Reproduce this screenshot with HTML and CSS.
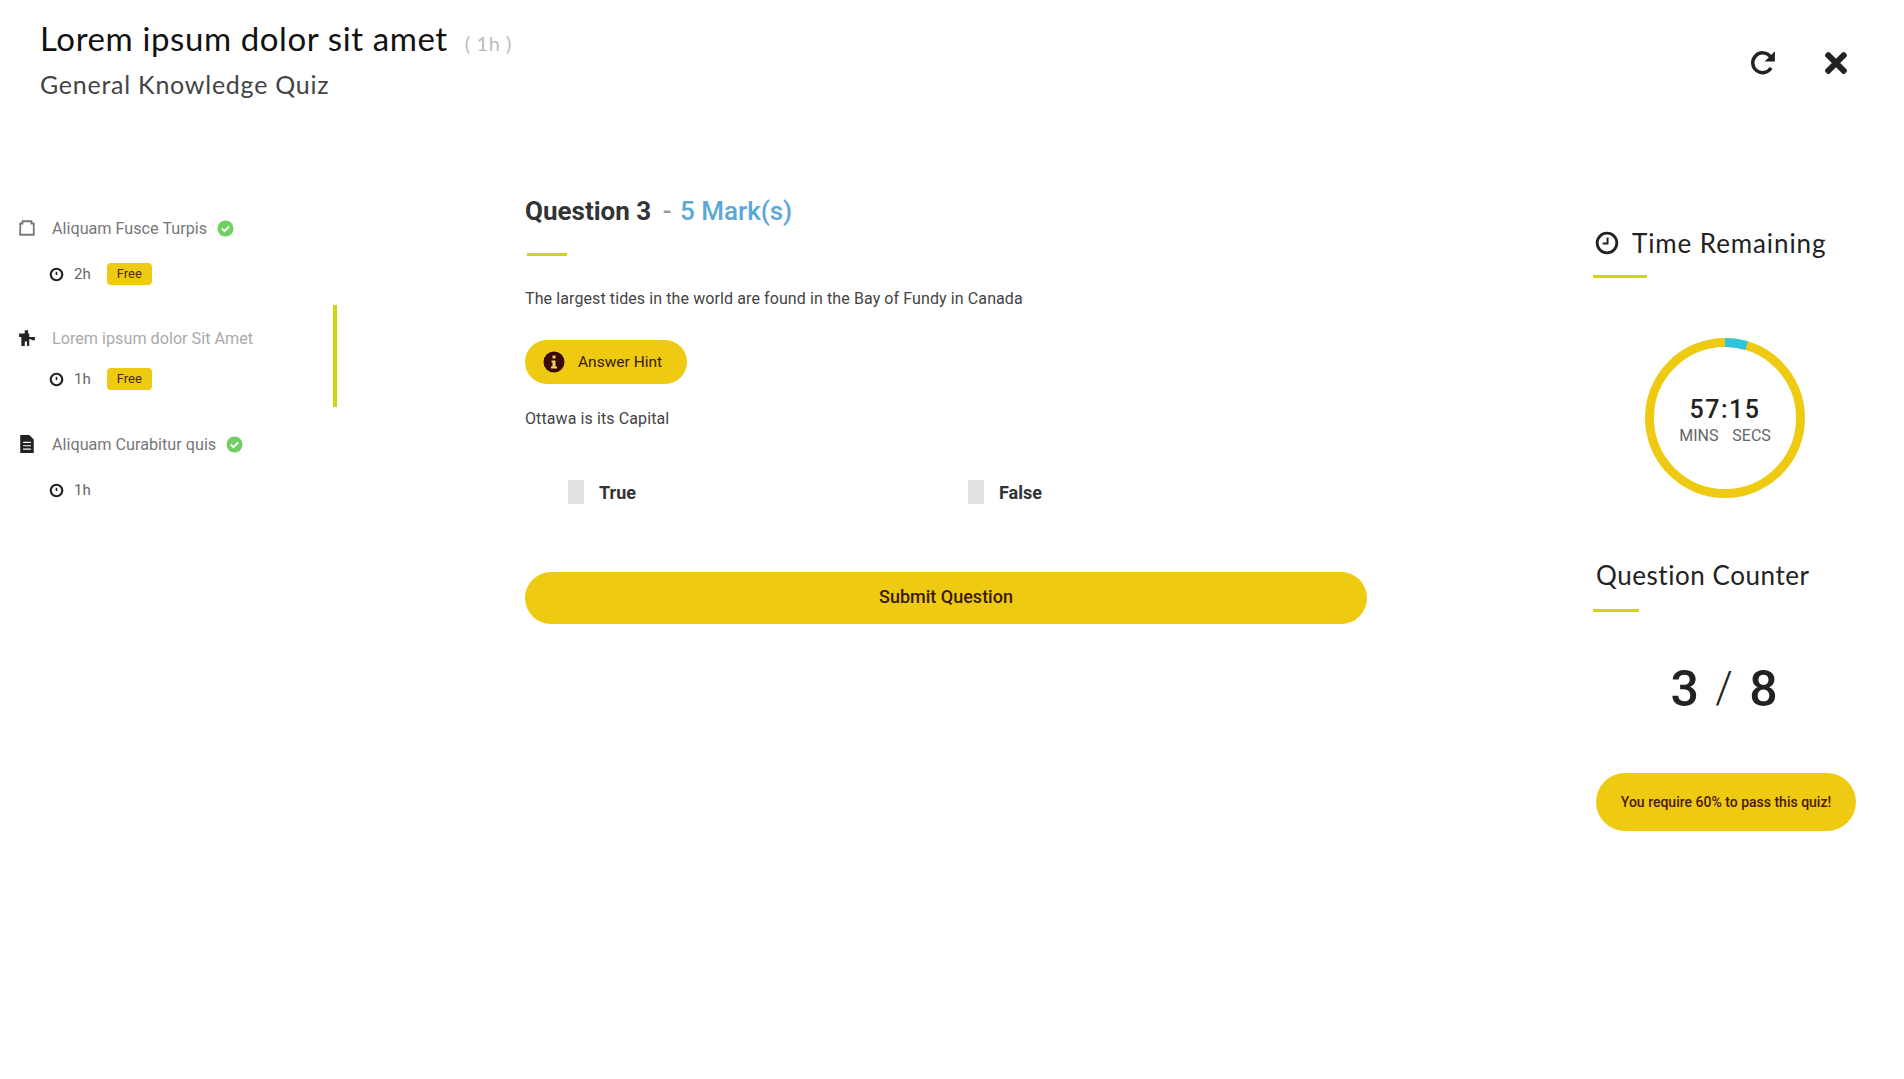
FILE: index.html
```html
<!DOCTYPE html>
<html lang="en">
<head>
<meta charset="UTF-8">
<meta name="viewport" content="width=device-width, initial-scale=1.0">
<title>General Knowledge Quiz</title>
<link rel="stylesheet" href="styles.css">
</head>
<body>

<!-- Top bar -->
<header class="top-bar">
<div class="course-info">
<h1>Lorem ipsum dolor sit amet <span class="course-length">( 1h )</span></h1>
<p>General Knowledge Quiz</p>
</div>
<div class="top-actions">
<svg class="icon-refresh" viewBox="0 0 26 26"><path d="M20.5 17.6A9.2 9.2 0 1 1 20 7.2" fill="none" stroke="#222" stroke-width="3.2"/><path d="M24 2v9.5h-9.5z" fill="#222"/></svg>
<svg class="icon-close" viewBox="0 0 352 512"><path fill="#222" d="M242.72 256l100.07-100.07c12.28-12.28 12.28-32.19 0-44.48l-22.24-22.24c-12.28-12.28-32.19-12.28-44.48 0L176 189.28 75.93 89.21c-12.28-12.28-32.19-12.28-44.48 0L9.21 111.45c-12.28 12.28-12.28 32.19 0 44.48L109.28 256 9.21 356.07c-12.28 12.28-12.28 32.19 0 44.48l22.24 22.24c12.28 12.28 32.2 12.28 44.48 0L176 322.72l100.07 100.07c12.28 12.28 32.2 12.28 44.48 0l22.24-22.24c12.28-12.28 12.28-32.19 0-44.48L242.72 256z"/></svg>
</div>
</header>

<div class="quiz-layout">

<!-- Lesson list -->
<aside class="lessons">
<div class="lesson">
<div class="lesson-title">
<svg class="lesson-icon" viewBox="0 0 16 16"><path d="M4 2h8v2h2v10H2V4h2z" fill="none" stroke="#777" stroke-width="1.6"/></svg>
<span>Aliquam Fusce Turpis</span>
<svg class="done-icon" viewBox="0 0 16 16"><circle cx="8" cy="8" r="7.5" fill="#6fcf63"/><path d="M4.5 8l2.5 2.5 4.5-4.5" fill="none" stroke="#fff" stroke-width="1.8"/></svg>
</div>
<div class="lesson-meta">
<svg class="clock" viewBox="0 0 14 14"><circle cx="7" cy="7" r="5.4" fill="none" stroke="#222" stroke-width="2"/><path d="M7 4.5V7.5" stroke="#222" stroke-width="1.5"/></svg>
<span>2h</span>
<span class="free-tag">Free</span>
</div>
</div>

<div class="lesson active">
<div class="lesson-title">
<svg class="lesson-icon" viewBox="0 0 16 16"><path fill="#222" d="M6 1h3v3h1v3h5v3h-3v-1h-2v6H8v-4H6v4H3V7H1V4h5z"/></svg>
<span class="light">Lorem ipsum dolor Sit Amet</span>
</div>
<div class="lesson-meta">
<svg class="clock" viewBox="0 0 14 14"><circle cx="7" cy="7" r="5.4" fill="none" stroke="#222" stroke-width="2"/><path d="M7 4.5V7.5" stroke="#222" stroke-width="1.5"/></svg>
<span>1h</span>
<span class="free-tag">Free</span>
</div>
</div>

<div class="lesson">
<div class="lesson-title">
<svg class="lesson-icon" viewBox="0 0 16 16"><path fill="#222" d="M2 0h8l4 4v12H2z"/><path d="M4.5 6.5h7M4.5 9.5h7M4.5 12.5h7" stroke="#fff" stroke-width="1"/></svg>
<span>Aliquam Curabitur quis</span>
<svg class="done-icon" viewBox="0 0 16 16"><circle cx="8" cy="8" r="7.5" fill="#6fcf63"/><path d="M4.5 8l2.5 2.5 4.5-4.5" fill="none" stroke="#fff" stroke-width="1.8"/></svg>
</div>
<div class="lesson-meta">
<svg class="clock" viewBox="0 0 14 14"><circle cx="7" cy="7" r="5.4" fill="none" stroke="#222" stroke-width="2"/><path d="M7 4.5V7.5" stroke="#222" stroke-width="1.5"/></svg>
<span>1h</span>
</div>
</div>
</aside>

<!-- Question -->
<main class="question">
<h2>Question 3 <span class="marks-sep">-</span> <span class="marks">5 Mark(s)</span></h2>
<div class="rule"></div>
<p class="question-text">The largest tides in the world are found in the Bay of Fundy in Canada</p>
<button class="hint-btn">
<svg viewBox="0 0 22 22"><circle cx="11" cy="11" r="10.5" fill="#3a0a06"/><rect x="9.5" y="4.5" width="3" height="3" fill="#f0d060"/><path d="M8.5 9.5h4v6h1.5v2H8v-2h1.5v-4h-1z" fill="#f0d060"/></svg>
Answer Hint
</button>
<p class="question-note">Ottawa is its Capital</p>
<div class="answers">
<label class="answer"><span class="box"></span>True</label>
<label class="answer"><span class="box"></span>False</label>
</div>
<button class="submit-btn">Submit Question</button>
</main>

<!-- Timer and counter -->
<aside class="side-panel">
<h3 class="timer-title"><svg viewBox="0 0 22 22"><circle cx="11" cy="11" r="9" fill="none" stroke="#222" stroke-width="2.6"/><path d="M11.5 6v5.5H7" fill="none" stroke="#222" stroke-width="1.8"/></svg>Time Remaining</h3>
<div class="rule timer-rule"></div>
<div class="timer">
<svg viewBox="0 0 160 160"><circle cx="80" cy="80" r="75.5" fill="none" stroke="#eeca12" stroke-width="9"/><circle cx="80" cy="80" r="75.5" fill="none" stroke="#2fc4dc" stroke-width="9" stroke-dasharray="22 460" transform="rotate(-90 80 80)"/></svg>
<div class="timer-text">
<strong>57:15</strong>
<span>MINS &nbsp;SECS</span>
</div>
</div>
<h3 class="counter-title">Question Counter</h3>
<div class="rule counter-rule"></div>
<div class="counter">3 <span class="slash">/</span> 8</div>
<div class="pass-note">You require 60% to pass this quiz!</div>
</aside>

</div>

</body>
</html>
```

FILE: styles.css
```css
* {
box-sizing: border-box;
}

body {
font-family: Roboto, Arial, sans-serif;
margin: 0;
background-color: #fff;
color: #222;
}

h1, h2, h3, p {
margin: 0;
font-weight: normal;
}

.top-bar {
display: flex;
justify-content: space-between;
height: 190px;
padding: 16px 55px 0 40px;
}

.course-info h1 {
font-family: Lato, Inter, sans-serif;
font-size: 33px;
line-height: 44px;
color: #111;
letter-spacing: 0.6px;
}

.course-length {
font-size: 20px;
color: #bbb;
margin-left: 8px;
}

.course-info p {
font-family: Lato, Inter, sans-serif;
font-size: 25px;
line-height: 36px;
margin-top: 1px;
color: #444;
letter-spacing: 0.75px;
}

.top-actions {
display: flex;
align-items: center;
gap: 46px;
height: 94px;
}

.icon-refresh {
width: 28px;
height: 28px;
}

.icon-close {
width: 26px;
height: 32px;
}

.quiz-layout {
display: grid;
grid-template-columns: 525px 842px 1fr;
}

.lessons {
padding-top: 23px;
}

.lesson {
width: 337px;
height: 92px;
padding: 4px 0 0 18px;
}

.lesson.active {
height: 102px;
border-right: 4px solid #cfd60a;
padding-top: 22px;
}

.lesson:last-child {
padding-top: 26px;
}

.lesson-title {
display: flex;
align-items: center;
font-size: 16.2px;
color: #777;
height: 22px;
}

.lesson-title .light {
color: #aaa;
}

.lesson-icon {
width: 18px;
height: 18px;
margin-right: 16px;
}

.done-icon {
width: 17px;
height: 17px;
margin-left: 10px;
}

.lesson-meta {
display: flex;
align-items: center;
font-size: 15px;
color: #666;
height: 26px;
margin-top: 22px;
padding-left: 31px;
}

.lesson.active .lesson-meta {
margin-top: 17px;
}

.clock {
width: 15px;
height: 15px;
margin-right: 10px;
}

.free-tag {
font-size: 13px;
line-height: 16px;
color: #4a2a00;
background-color: #eeca12;
border-radius: 4px;
padding: 3px 10px;
margin-left: 16px;
}

.question h2 {
font-size: 26px;
font-weight: 700;
line-height: 42px;
color: #333;
}

.marks-sep {
color: #999;
font-weight: 500;
margin: 0 2px 0 5px;
}

.marks {
color: #5aa7d8;
font-weight: 500;
}

.rule {
width: 40px;
height: 3px;
background-color: #cfd60a;
margin: 21px 0 0 2px;
}

.question-text {
font-size: 16px;
letter-spacing: 0.1px;
line-height: 22px;
color: #444;
margin-top: 32px;
}

.hint-btn {
display: flex;
align-items: center;
gap: 13px;
width: 162px;
height: 44px;
margin-top: 30px;
padding: 0 18px;
border: none;
border-radius: 22px;
background-color: #eeca12;
color: #3a1a00;
font-family: Roboto, Arial, sans-serif;
font-size: 15.5px;
white-space: nowrap;
}

.hint-btn svg {
width: 22px;
height: 22px;
flex-shrink: 0;
}

.question-note {
font-size: 16px;
letter-spacing: 0.1px;
line-height: 22px;
color: #444;
margin-top: 24px;
}

.answers {
display: grid;
grid-template-columns: 400px 1fr;
margin-top: 50px;
padding-left: 43px;
}

.answer {
display: flex;
align-items: center;
font-size: 18px;
font-weight: 700;
color: #333;
height: 24px;
}

.box {
width: 16px;
height: 24px;
background-color: #e2e2e2;
margin-right: 15px;
}

.submit-btn {
display: block;
width: 842px;
height: 52px;
margin-top: 68px;
padding-bottom: 5px;
border: none;
border-radius: 26px;
background-color: #eeca12;
color: #3a1a00;
font-family: Roboto, Arial, sans-serif;
font-size: 18px;
font-weight: 500;
}

.side-panel {
padding: 35px 0 0 226px;
}

.side-panel h3 {
font-family: Lato, Inter, sans-serif;
font-size: 26px;
line-height: 36px;
color: #222;
letter-spacing: 0.55px;
white-space: nowrap;
}

.side-panel .timer-title {
display: flex;
align-items: center;
padding-left: 2px;
letter-spacing: 0.9px;
}

.timer-title svg {
width: 24px;
height: 24px;
margin-right: 13px;
}

.timer-rule {
width: 54px;
margin: 14px 0 0 0;
}

.timer {
position: relative;
width: 160px;
height: 160px;
margin: 60px 0 0 52px;
}

.timer svg {
width: 160px;
height: 160px;
display: block;
}

.timer-text {
position: absolute;
inset: 0;
display: flex;
flex-direction: column;
align-items: center;
justify-content: center;
padding-top: 5px;
}

.timer-text strong {
font-size: 25px;
font-weight: 500;
letter-spacing: 1.5px;
line-height: 30px;
color: #222;
}

.timer-text span {
font-size: 16px;
color: #666;
line-height: 22px;
white-space: nowrap;
word-spacing: 3px;
}

.counter-title {
margin-top: 59px;
padding-left: 3px;
}

.counter-rule {
width: 46px;
margin: 16px 0 0 0;
}

.counter {
width: 262px;
text-align: center;
font-size: 50px;
font-weight: 500;
line-height: 60px;
color: #222;
margin-top: 47px;
}

.slash {
font-weight: 300;
font-size: 44px;
margin: 0 4px;
position: relative;
top: -3px;
}

.pass-note {
display: flex;
align-items: center;
justify-content: center;
width: 260px;
height: 58px;
margin: 52px 0 0 3px;
border-radius: 29px;
background-color: #eeca12;
color: #4a1a00;
font-size: 14px;
font-weight: 500;
white-space: nowrap;
}
```
